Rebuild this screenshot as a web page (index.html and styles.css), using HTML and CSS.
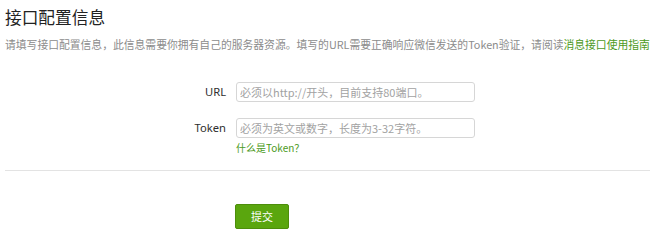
FILE: index.html
```html
<!DOCTYPE html>
<html lang="zh-CN">
<head>
<meta charset="utf-8">
<title>接口配置信息</title>
<link rel="stylesheet" href="styles.css">
</head>
<body>
<div class="page">
  <h1 class="title">接口配置信息</h1>
  <p class="desc">请填写接口配置信息，此信息需要你拥有自己的服务器资源。填写的URL需要正确响应微信发送的Token验证，请阅读<a class="link" href="#">消息接口使用指南</a></p>
  <form class="form">
    <div class="row">
      <label class="label">URL</label>
      <input class="input" type="text" placeholder="必须以http://开头，目前支持80端口。">
    </div>
    <div class="row row-token">
      <label class="label">Token</label>
      <div class="field">
        <input class="input" type="text" placeholder="必须为英文或数字，长度为3-32字符。">
        <a class="hint" href="#">什么是Token？</a>
      </div>
    </div>
  </form>
  <div class="divider"></div>
  <div class="actions">
    <button class="btn" type="button">提交</button>
  </div>
</div>
</body>
</html>
```

FILE: styles.css
```css
html, body {
  margin: 0;
  padding: 0;
  background: #ffffff;
}

body {
  font-family: "Noto Sans CJK SC", "Noto Sans", sans-serif;
  color: #333333;
}

.page {
  padding: 7px 0 0 5px;
}

.title {
  margin: 0;
  font-size: 16.7px;
  line-height: 20px;
  font-weight: normal;
  color: #222222;
}

.desc {
  margin: 9px 0 0 0;
  font-size: 10.8px;
  line-height: 16px;
  color: #8c8c8c;
  white-space: nowrap;
}

.link {
  color: #4c9a1c;
  text-decoration: none;
}

.form {
  margin-top: 30px;
}

.row {
  display: flex;
  align-items: flex-start;
  gap: 10px;
}

.row-token {
  margin-top: 16px;
}

.label {
  width: 221px;
  flex: none;
  text-align: right;
  font-family: "Noto Sans", "Noto Sans CJK SC", sans-serif;
  font-size: 11.2px;
  line-height: 20px;
  color: #2e2e2e;
}

.field {
  display: flex;
  flex-direction: column;
  align-items: flex-start;
}

.input {
  box-sizing: border-box;
  width: 239px;
  height: 20px;
  margin: 0;
  padding: 0 3px;
  border: 1px solid #d6d6d6;
  border-radius: 3px;
  font-family: "Noto Sans CJK SC", "Noto Sans", sans-serif;
  font-size: 11px;
  color: #333333;
  background: #ffffff;
  outline: none;
}

.input::placeholder {
  color: #a2a2a2;
}

.hint {
  margin-top: 3px;
  font-size: 10px;
  line-height: 14px;
  color: #4c9a1c;
  text-decoration: none;
}

.divider {
  margin-top: 15px;
  height: 1px;
  background: #e3e3e3;
}

.actions {
  padding: 31px 0 0 230px;
}

.btn {
  box-sizing: border-box;
  width: 54px;
  height: 25px;
  margin: 0;
  padding: 0;
  border: 1px solid #4d8e0b;
  border-radius: 2px;
  background: #5aa60e;
  color: #ffffff;
  font-family: "Noto Sans CJK SC", "Noto Sans", sans-serif;
  font-size: 11px;
  line-height: 23px;
  cursor: pointer;
}
```
